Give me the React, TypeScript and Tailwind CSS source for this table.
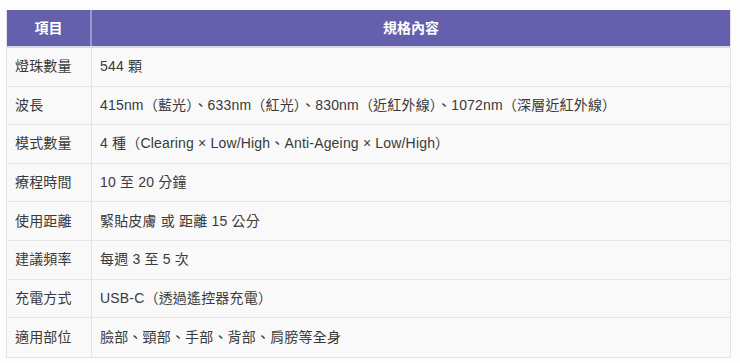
import React from "react";

const rows: [string, string][] = [
  ["燈珠數量", "544 顆"],
  ["波長", "415nm（藍光）、633nm（紅光）、830nm（近紅外線）、1072nm（深層近紅外線）"],
  ["模式數量", "4 種（Clearing × Low/High、Anti-Ageing × Low/High）"],
  ["療程時間", "10 至 20 分鐘"],
  ["使用距離", "緊貼皮膚 或 距離 15 公分"],
  ["建議頻率", "每週 3 至 5 次"],
  ["充電方式", "USB-C（透過遙控器充電）"],
  ["適用部位", "臉部、頸部、手部、背部、肩膀等全身"],
];

export default function App() {
  return (
    <div
      className="w-[740px] h-[363px] bg-[#fdfdfd] pt-[10px] pl-[6px]"
      style={{ fontFamily: '"Liberation Sans", "Noto Sans CJK TC", sans-serif' }}
    >
      <div className="w-[725px] border border-[#e3e3e3] border-t-0">
        <div className="flex h-[38px] bg-[#6560ad] border-b-2 border-[#d9d8e6] text-white font-bold text-[14px]">
          <div className="w-[85px] flex items-center justify-center border-r-2 border-[#9c98d0]">項目</div>
          <div className="flex-1 flex items-center justify-center">規格內容</div>
        </div>
        {rows.map(([k, v], i) => (
          <div
            key={i}
            className={`flex h-[38.6px] bg-[#f9f9f9] text-[14px] text-[#3a3a3a] tracking-[0.18px] ${i < rows.length - 1 ? "border-b border-[#e6e6e6]" : ""}`}
          >
            <div className="w-[85px] flex items-center pl-[8px] border-r border-[#e3e3e3]">{k}</div>
            <div className="flex-1 flex items-center pl-[8px]">{v}</div>
          </div>
        ))}
      </div>
    </div>
  );
}
